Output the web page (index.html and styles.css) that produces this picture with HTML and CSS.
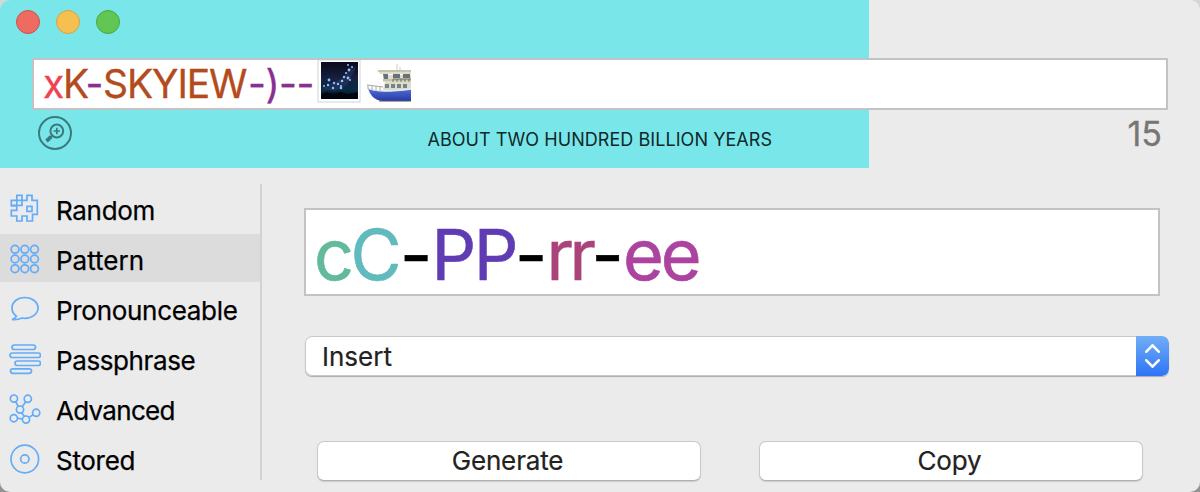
FILE: index.html
```html
<!DOCTYPE html>
<html lang="en">
<head>
<meta charset="utf-8">
<title>Password Generator</title>
<link rel="stylesheet" href="styles.css">
</head>
<body>
<div class="window">
  <header class="header">
    <div class="lights">
      <span class="light close"></span><span class="light minimize"></span><span class="light zoom"></span>
    </div>
    <div class="password">
      <span class="lower">x</span><span class="upper k">K</span><span class="symbol dash">-</span><span class="upper word">SKYIEW</span><span class="symbol dash">-</span><span class="symbol paren">)</span><span class="symbol dash">-</span><span class="symbol dash">-</span>
      <svg class="emoji" width="96" height="48" viewBox="0 0 96 48">
        <defs>
          <linearGradient id="night" x1="0" y1="0" x2="0" y2="1"><stop offset="0" stop-color="#080a18"/><stop offset=".45" stop-color="#17203f"/><stop offset=".75" stop-color="#0a2a44"/><stop offset="1" stop-color="#020712"/></linearGradient>
          <linearGradient id="hull" x1="0" y1="0" x2="0" y2="1"><stop offset="0" stop-color="#5271d8"/><stop offset="1" stop-color="#2839a5"/></linearGradient>
        </defs>
        <rect x="1" y="0" width="42" height="42" fill="#fff" stroke="#dfe3e6" stroke-width="1.5"/>
        <rect x="4" y="2" width="37" height="37" fill="url(#night)"/>
        <path d="M5 29L15 23 26 18 34 6 39 8 30 25 18 31z" fill="#41437d" opacity=".35"/>
        <path d="M4 34l6-2 6 2 8-2 7 2 10-2v7H4z" fill="#010510"/>
        <g fill="#86c7ff"><circle cx="12" cy="20" r="1.4"/><circle cx="7" cy="26" r="1"/><circle cx="11" cy="25" r="1.2"/><circle cx="17" cy="23" r="1.2"/><circle cx="16" cy="28" r="1.2"/><circle cx="21" cy="24" r="1.2"/><circle cx="24" cy="26" r="1.1"/><circle cx="25" cy="21" r="1.3"/><circle cx="27" cy="17" r="1.2"/><circle cx="31" cy="18" r="1.4"/><circle cx="29" cy="13" r="1.1"/><circle cx="32" cy="10" r="1.4"/><circle cx="31" cy="5" r="1"/><circle cx="35" cy="7" r="1"/><circle cx="33" cy="20" r="1"/><circle cx="24" cy="28" r="1.3"/></g>
        <path d="M80 4v8M83 7v5" stroke="#dedfc9" stroke-width="1.4"/>
        <path d="M61 10h33v4H63zM66 15h28v7H66zM68 22h26v8H66z" fill="#dddccb"/>
        <path d="M61 11h33M66 20h28" stroke="#a9a794"/>
        <path d="M66 14h5v5h-4zM76 14h7v4h-7zM86 14h7v4h-7z" fill="#65717b"/>
        <path d="M68 24h4v4h-4zM74 24h4v4h-4zM80 24h4v4h-4zM86 24h4v4h-4z" fill="#75838b"/>
        <path d="M76 22v-3h18M80 19v3M84 19v3M88 19v3M92 19v3" fill="none" stroke="#77715f"/>
        <path d="M51 28c6 4 20 4 43 1v12H65c-7-1-12-5-14-13z" fill="url(#hull)"/>
        <path d="M51 28c6 4 20 4 43 1" fill="none" stroke="#e4e9ec" stroke-width="1.5"/>
        <path d="M50 25l16 2M51 25v4M55 25v5M59 26v5M63 26v5" fill="none" stroke="#a7aaa9"/>
        <path d="M62 41h32" stroke="#525262" stroke-width="1"/>
      </svg>
    </div>
    <div class="status">
      <svg class="magnify" width="34" height="34" viewBox="0 0 34 34" fill="none" stroke="#3c797c">
        <circle cx="17" cy="17" r="16" stroke-width="2"/><circle cx="18.800" cy="15" r="6.400" stroke-width="2"/>
        <path d="M18.800 11.800v6.400M15.600 15H22" stroke-width="1.700"/><path d="M14.200 19.600l-2 2" stroke-width="2"/><path d="M13.100 20.700L8.500 25.200" stroke-width="3.800"/>
      </svg>
      <span class="strength">ABOUT TWO HUNDRED BILLION YEARS</span>
      <span class="count">15</span>
    </div>
  </header>
  <div class="content">
    <nav class="sidebar">
      <div class="item"><svg class="icon" viewBox="0 0 32 32"><path d="M7.800 1.300H13v5h5v-5h5v5h5.300v5.500v8.500H23.500v6.700H18v-5h-5v5H7.800v-5H2.300v-5.700h5.500v-4.500H2.300V6.300h5.500zM7.800 6.300H13v5H7.800zM7.800 11.300H2.300M13 6.300v5M13 6.300H7.800M18 12.300h5v5h-5z"/></svg><span class="w-random">Random</span></div>
      <div class="item selected"><svg class="icon" viewBox="0 0 32 32"><circle cx="6" cy="5.300" r="3.900"/><circle cx="15.800" cy="5.300" r="3.900"/><circle cx="25.500" cy="5.300" r="3.900"/><circle cx="6" cy="15" r="3.900"/><circle cx="15.800" cy="15" r="3.900"/><circle cx="25.500" cy="15" r="3.900"/><circle cx="6" cy="24.700" r="3.900"/><circle cx="15.800" cy="24.700" r="3.900"/><circle cx="25.500" cy="24.700" r="3.900"/></svg><span class="w-pattern">Pattern</span></div>
      <div class="item"><svg class="icon" viewBox="0 0 32 32"><path d="M7.500 22.200C4.500 20.300 3 17.300 3 14 3 8 8.500 3.500 15.800 3.500S29 8 29 14 23 24.300 15.800 24.300c-1 0-2-.1-2.800-.3-3 1.500-6.500 2-10 1.500 2-.7 3.500-1.500 4.500-3.300z"/></svg><span class="w-pronounceable">Pronounceable</span></div>
      <div class="item"><svg class="icon" viewBox="0 0 32 32"><rect x="3" y="1" width="23.500" height="4.500" rx="2.250"/><rect x="1" y="9" width="30.500" height="4.500" rx="2.250"/><rect x="6" y="17" width="25.500" height="4.500" rx="2.250"/><rect x="1.500" y="24.800" width="21" height="4.500" rx="2.250"/></svg><span class="w-passphrase">Passphrase</span></div>
      <div class="item"><svg class="icon" viewBox="0 0 32 32"><circle cx="4.900" cy="4.600" r="3.600"/><circle cx="18.800" cy="4.800" r="3.600"/><circle cx="11" cy="15.600" r="3.600"/><circle cx="27.200" cy="18.800" r="3.600"/><circle cx="4.800" cy="24.200" r="3.600"/><circle cx="17" cy="25.600" r="3.600"/><path d="M6.700 7.700l2.500 4.700M16.700 7.700l-3.500 5M12.500 18.900l3 3.300M8.300 24.200l5 .8M19.800 23.600l4.500-3"/></svg><span class="w-advanced">Advanced</span></div>
      <div class="item"><svg class="icon" viewBox="0 0 32 32"><circle cx="15.800" cy="15" r="13.800"/><circle cx="15.800" cy="15" r="4.200"/></svg><span class="w-stored">Stored</span></div>
    </nav>
    <main class="main">
      <div class="pattern"><span class="p1">c</span><span class="p2">C</span><span class="bar">-</span><span class="p3">PP</span><span class="bar">-</span><span class="p4">rr</span><span class="bar">-</span><span class="p5">ee</span></div>
      <div class="select"><span class="w-insert">Insert</span><span class="arrows"><svg width="33" height="40" viewBox="0 0 33 40" fill="none" stroke="#fff" stroke-width="2.600" stroke-linecap="round" stroke-linejoin="round"><path d="M10.300 15.700L16.500 9.300l6.200 6.400M10.300 24.300l6.200 6.400 6.200-6.400"/></svg></span></div>
      <div class="actions"><button class="button"><span class="w-generate">Generate</span></button><button class="button"><span class="w-copy">Copy</span></button></div>
    </main>
  </div>
</div>
</body>
</html>
```
FILE: styles.css
```css
* { box-sizing: border-box; }
body { margin: 0; background: linear-gradient(#d6d6d6, #929292); font-family: Inter, "Liberation Sans", sans-serif; color: #000; }
.window { width: 1200px; height: 492px; border-radius: 10px; overflow: hidden; background: #ebebeb; }
.header { height: 168px; padding: 10px 32px 0; background: linear-gradient(#79e7e9, #79e7e9) 0 0 / 869px 100% no-repeat; }
.lights { display: flex; gap: 16px; margin-left: -16px; height: 48px; }
.light { width: 24px; height: 24px; border-radius: 50%; border: 1px solid; }
.close { background: #ed6b60; border-color: #d05147; }
.minimize { background: #f5c04f; border-color: #d6a243; }
.zoom { background: #62c655; border-color: #4ba73f; }
.password { display: flex; align-items: center; height: 52px; padding-left: 9px; background: #fff; border: 2px solid #c3c3c3; font-size: 39px; line-height: 48px; -webkit-text-stroke: 0.3px; }
.lower { color: #f04351; width: 20px; letter-spacing: -1.6px; }
.upper { color: #b44b1d; }
.symbol { color: #8a2f91; }
.k { width: 22.500px; letter-spacing: -3.500px; }
.dash { width: 17.500px; letter-spacing: -0.600px; }
.paren { width: 13.500px; letter-spacing: -1.500px; }
.word { width: 145px; letter-spacing: -1.100px; }
.emoji { margin-left: 3px; }
.status { display: flex; justify-content: space-between; padding: 6px 6px 0; }
.magnify { display: block; }
.strength { font-size: 18px; line-height: 22px; margin-top: 13px; letter-spacing: 0.060px; color: #10282a; }
.count { font-size: 34px; line-height: 36px; color: #767676; -webkit-text-stroke: 0.300px; }
.content { display: flex; padding-top: 16px; }
.sidebar { width: 262px; height: 296px; border-right: 2px solid #d2d2d2; display: flex; flex-direction: column; gap: 2px; }
.item { flex: none; display: flex; align-items: center; gap: 15px; height: 48px; padding-left: 9px; font-size: 26px; line-height: 32px; -webkit-text-stroke: 0.250px; }
.item span { padding-top: 5px; letter-spacing: -0.300px; }
.item .w-pattern { letter-spacing: 0; }
.item .w-advanced { letter-spacing: -0.700px; }
.item .w-passphrase { letter-spacing: -0.400px; }
.selected { background: #dcdcdc; }
.icon { width: 32px; height: 32px; margin-top: 4px; fill: none; stroke: #64acf8; stroke-width: 1.7; }
.main { flex: 1; padding: 24px 31px 0 42px; }
.pattern { width: 856px; height: 88px; padding-left: 8px; background: #fff; border: 2px solid #c3c3c3; display: flex; font-size: 70px; line-height: 90px; -webkit-text-stroke: 0.600px; }
.p1 { color: #63ba9a; width: 36.500px; letter-spacing: -4px; }
.p2 { color: #61babd; width: 49.500px; letter-spacing: -3px; }
.bar { color: #000; width: 31.500px; letter-spacing: -1.500px; }
.p3 { color: #5f3cb4; width: 83.500px; letter-spacing: -2.500px; }
.p4 { color: #a9437a; width: 45px; letter-spacing: -4.500px; }
.p5 { color: #ac449f; letter-spacing: -3px; }
.select { display: flex; justify-content: space-between; align-items: center; width: 864px; height: 40px; margin: 40px 0 0 1px; padding-left: 17px; background: #fff; border-radius: 7px; box-shadow: 0 0 0 1px #c8c8c8 inset, 0 1px 1px #aaa; font-size: 26px; color: #222; overflow: hidden; }
.arrows { width: 33px; height: 40px; background: linear-gradient(#71aef6, #2e74f6); border-radius: 0 7px 7px 0; }
.actions { display: flex; gap: 58px; margin: 65px 0 0 13px; }
.button { width: 384px; height: 40px; padding: 0 3px 2px 0; border: 1px solid #c9c9c9; border-bottom-color: #b0b0b0; border-radius: 7px; background: #fff; box-shadow: 0 1px 1px #ccc; font: 26px Inter, sans-serif; letter-spacing: -0.150px; color: #222; }
.select, .button { -webkit-text-stroke: 0.200px; }
```
